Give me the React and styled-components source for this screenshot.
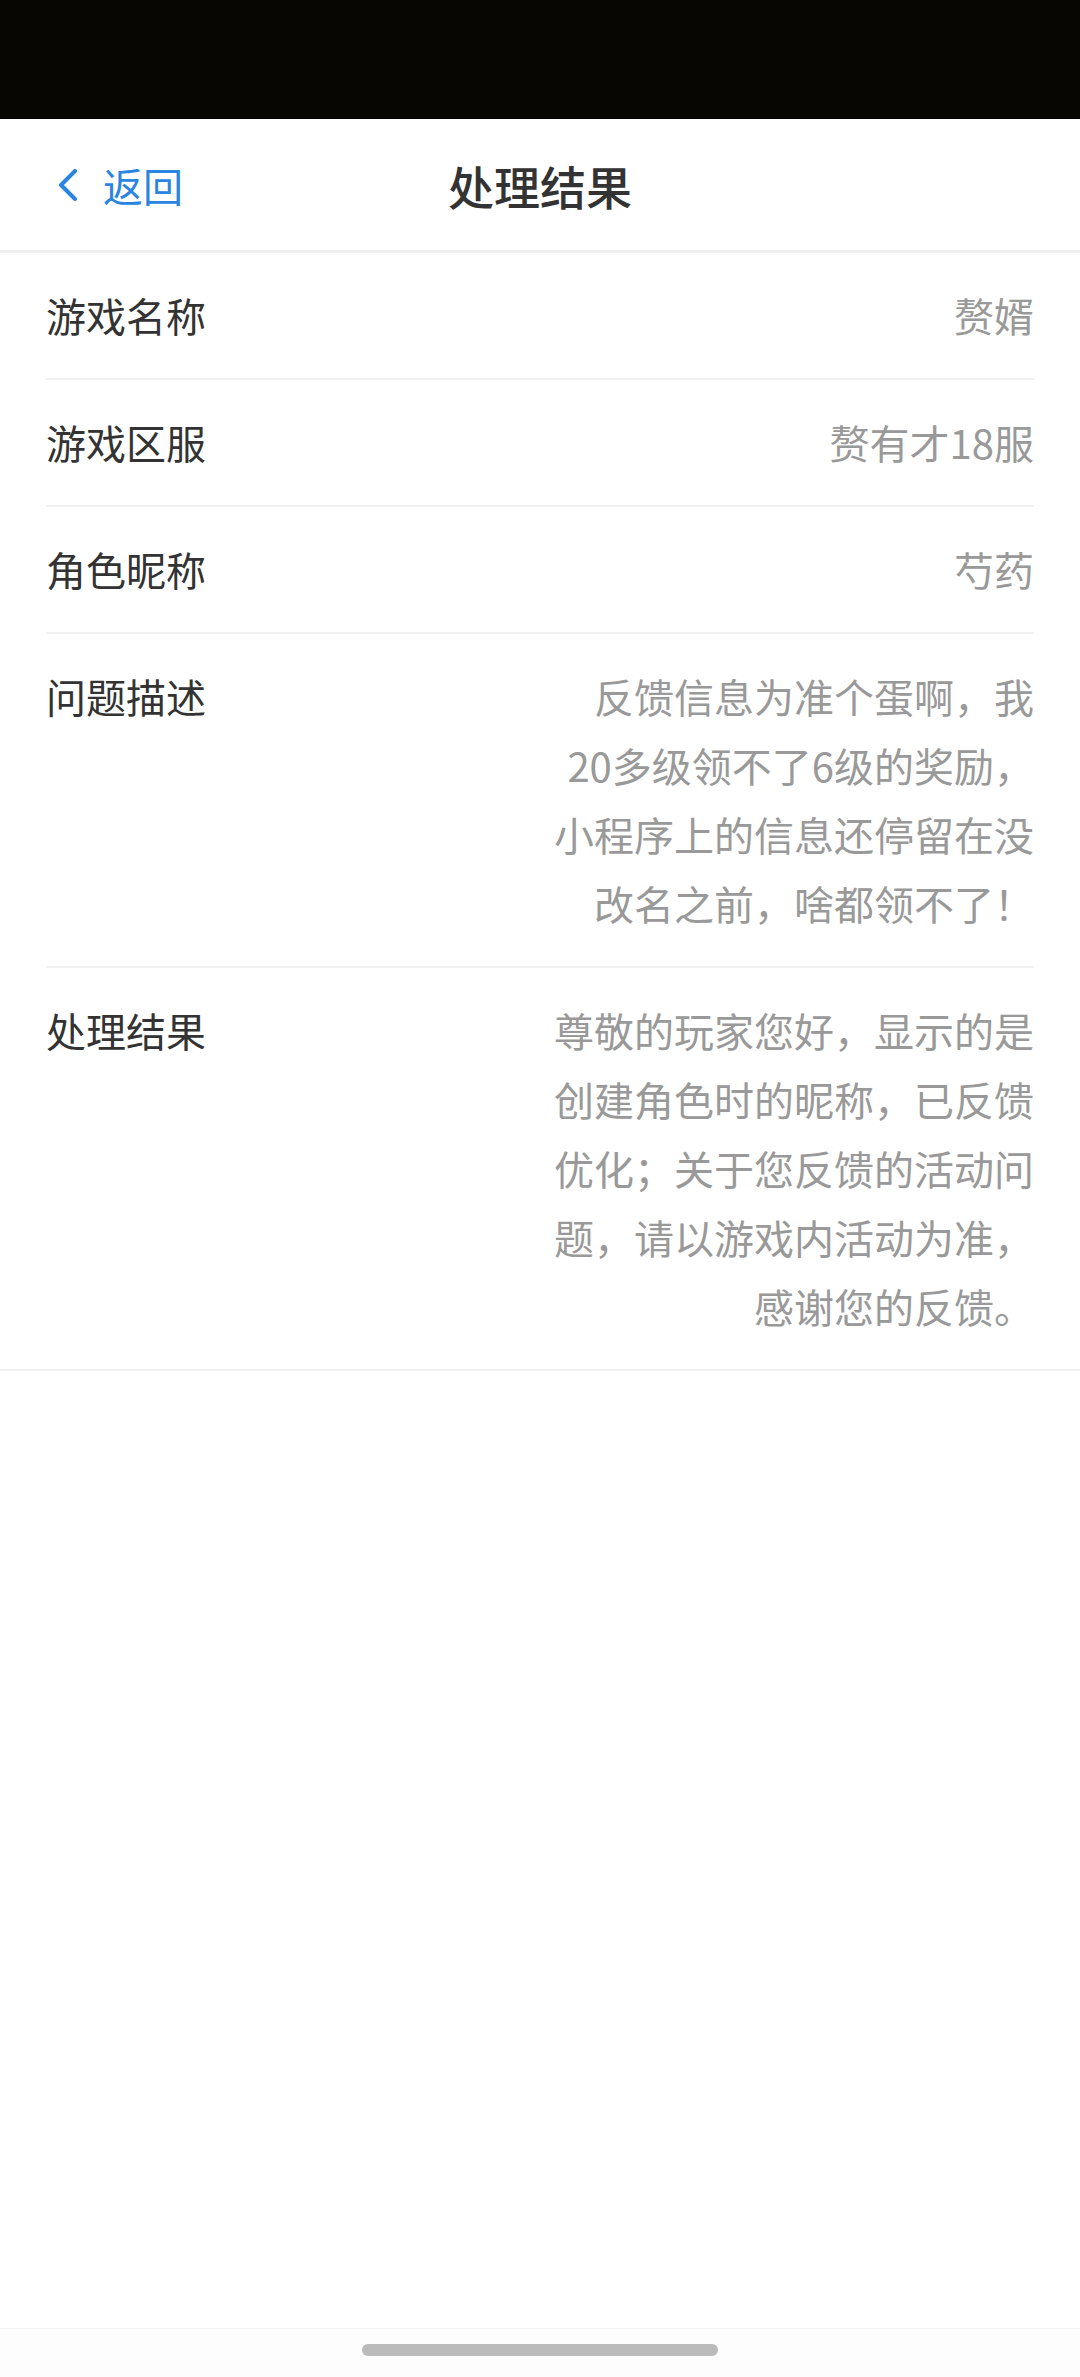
import React from "react";
import styled, { createGlobalStyle } from "styled-components";

const GlobalStyle = createGlobalStyle`
  html, body {
    margin: 0;
    padding: 0;
    background: #fff;
  }
  body {
    font-family: "Noto Sans CJK SC", "Noto Sans", sans-serif;
  }
`;

const Page = styled.div`
  width: 1080px;
  min-height: 2377px;
  display: flex;
  flex-direction: column;
  background: #fff;
`;

const StatusBar = styled.div`
  height: 119px;
  background: #080602;
`;

const NavBar = styled.div`
  height: 131px;
  display: flex;
  align-items: center;
  justify-content: center;
  position: relative;
  border-bottom: 3px solid #efefef;
`;

const BackButton = styled.div`
  position: absolute;
  left: 57px;
  top: 0;
  bottom: 0;
  display: flex;
  align-items: center;
  gap: 24px;
  color: #2a84e1;
  font-size: 40px;
`;

const Title = styled.h1`
  margin: 0;
  font-size: 46px;
  font-weight: 500;
  color: #333;
`;

const List = styled.div`
  border-bottom: 2px solid #f0f0f0;
`;

const Row = styled.div`
  margin: 0 46px;
  padding: 28px 0;
  display: flex;
  justify-content: space-between;
  align-items: flex-start;
  border-bottom: ${(p) => (p.$last ? "none" : "2px solid #f0f0f0")};
  font-size: 40px;
  line-height: 69px;
`;

const Label = styled.div`
  color: #333;
  flex-shrink: 0;
`;

const Value = styled.div`
  color: #999;
  text-align: right;
  max-width: 484px;
`;

const Spacer = styled.div`
  flex: 1;
`;

const BottomBar = styled.div`
  height: 49px;
  border-top: 1px solid #f3f3f3;
  background: #fdfdfd;
  display: flex;
  justify-content: center;
  padding-top: 15px;
  box-sizing: border-box;
`;

const HomeIndicator = styled.div`
  width: 356px;
  height: 12px;
  border-radius: 6px;
  background: #bbb;
`;

const rows = [
  { label: "游戏名称", value: "赘婿" },
  { label: "游戏区服", value: "赘有才18服" },
  { label: "角色昵称", value: "芍药" },
  {
    label: "问题描述",
    value: "反馈信息为准个蛋啊，我20多级领不了6级的奖励，小程序上的信息还停留在没改名之前，啥都领不了！",
  },
  {
    label: "处理结果",
    value: "尊敬的玩家您好，显示的是创建角色时的昵称，已反馈优化；关于您反馈的活动问题，请以游戏内活动为准，感谢您的反馈。",
  },
];

const App = () => {
  return (
    <Page>
      <GlobalStyle />
      <StatusBar />
      <NavBar>
        <BackButton>
          <svg width="22" height="32" viewBox="0 0 22 32" fill="none">
            <path
              d="M18 2 L4 16 L18 30"
              stroke="#2a84e1"
              strokeWidth="4"
              strokeLinecap="round"
              strokeLinejoin="round"
            />
          </svg>
          <span>返回</span>
        </BackButton>
        <Title>处理结果</Title>
      </NavBar>
      <List>
        {rows.map((r, i) => (
          <Row key={r.label} $last={i === rows.length - 1}>
            <Label>{r.label}</Label>
            <Value>{r.value}</Value>
          </Row>
        ))}
      </List>
      <Spacer />
      <BottomBar>
        <HomeIndicator />
      </BottomBar>
    </Page>
  );
};

export default App;
